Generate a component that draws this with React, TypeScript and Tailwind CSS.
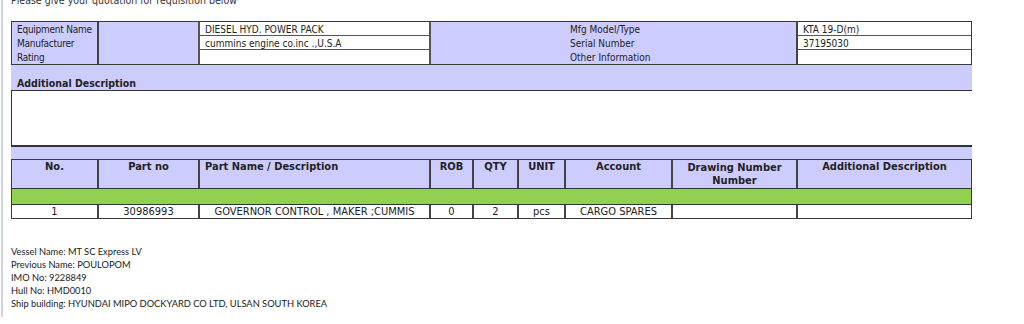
import React from "react";

const F = { fontFamily: '"DejaVu Sans Condensed", "DejaVu Sans", sans-serif' };

export default function App() {
  const lav = "bg-[#ccccff]";
  return (
    <div className="w-[1024px] h-[324px] overflow-hidden bg-white pl-[1px]">
      <div className="h-full border-l-2 border-[#cfd5de] pl-[8px] text-[10.5px] text-[#222]" style={F}>
        <div className="-mt-[7px] h-[14px] leading-[14px] text-[#333] whitespace-nowrap">Please give your quotation for requisition below</div>
        <div className="h-[14px]" />
        {/* top table */}
        <div className="w-[961px] border border-[#3a3a3a] flex leading-[14px] whitespace-nowrap text-[10px]">
          <div className={`w-[87px] ${lav} border-r-2 border-[#444] pl-[5px] pt-[1px] tracking-[-0.25px]`}>
            <div className="h-[14px]">Equipment Name</div>
            <div className="h-[14px]">Manufacturer</div>
            <div className="h-[13px]">Rating</div>
          </div>
          <div className={`w-[101px] ${lav} border-r-2 border-[#555]`} />
          <div className="w-[231px] bg-white border-r-2 border-[#555]">
            <div className="h-[14px] pl-[5px] pt-[1px] leading-[13px] border-b border-[#555]">DIESEL HYD. POWER PACK</div>
            <div className="h-[14px] pl-[5px] pt-[1px] leading-[13px] border-b border-[#555]">cummins engine co.inc .,U.S.A</div>
            <div className="h-[13px]" />
          </div>
          <div className={`w-[367px] ${lav} border-r-2 border-[#444] pl-[139px] pt-[1px]`}>
            <div className="h-[14px]">Mfg Model/Type</div>
            <div className="h-[14px]">Serial Number</div>
            <div className="h-[13px]">Other Information</div>
          </div>
          <div className="flex-1 bg-white">
            <div className="h-[14px] pl-[5px] pt-[1px] leading-[13px] border-b border-[#555]">KTA 19-D(m)</div>
            <div className="h-[14px] pl-[5px] pt-[1px] leading-[13px] border-b border-[#555]">37195030</div>
            <div className="h-[13px]" />
          </div>
        </div>
        {/* additional description band */}
        <div className={`w-[961px] ${lav} pt-[12px] h-[25px] pl-[6px] font-bold leading-[13px]`}>Additional Description</div>
        <div className="w-[961px] h-[57px] bg-white border-t border-b-2 border-l border-[#333]" />
        <div className={`w-[961px] ${lav} h-[12px]`} />
        {/* main table */}
        <div className="w-[961px] border border-[#3a3a3a] leading-[14px] whitespace-nowrap text-[11px]">
          <div className={`flex ${lav} h-[29px] font-bold border-b border-[#333]`}>
            <div className="w-[87px] text-center border-r-2 border-[#444]">No.</div>
            <div className="w-[101px] text-center border-r-2 border-[#444]">Part no</div>
            <div className="w-[231px] pl-[5px] border-r-2 border-[#444]">Part Name / Description</div>
            <div className="w-[43px] text-center border-r-2 border-[#444]">ROB</div>
            <div className="w-[45px] text-center border-r-2 border-[#444]">QTY</div>
            <div className="w-[47px] text-center border-r-2 border-[#444]">UNIT</div>
            <div className="w-[107px] text-center border-r-2 border-[#444]">Account</div>
            <div className="w-[125px] text-center border-r-2 border-[#444] leading-[13px] pt-[1px]">Drawing Number<br />Number</div>
            <div className="flex-1 text-center">Additional Description</div>
          </div>
          <div className="h-[16px] bg-[#92d050] border-b border-[#333]" />
          <div className="flex h-[13px] leading-[13px] bg-white">
            <div className="w-[87px] text-center border-r-2 border-[#444]">1</div>
            <div className="w-[101px] text-center border-r-2 border-[#444]">30986993</div>
            <div className="w-[231px] text-center border-r-2 border-[#444]">GOVERNOR CONTROL , MAKER ;CUMMIS</div>
            <div className="w-[43px] text-center border-r-2 border-[#444]">0</div>
            <div className="w-[45px] text-center border-r-2 border-[#444]">2</div>
            <div className="w-[47px] text-center border-r-2 border-[#444]">pcs</div>
            <div className="w-[107px] text-center border-r-2 border-[#444]">CARGO SPARES</div>
            <div className="w-[125px] border-r-2 border-[#444]" />
            <div className="flex-1" />
          </div>
        </div>
        {/* vessel info */}
        <div className="mt-[26px] text-[9.3px] leading-[13px] text-[#1a1a1a]" style={{ fontFamily: 'Lato, "Open Sans", sans-serif' }}>
          <div>Vessel Name: MT SC Express LV</div>
          <div>Previous Name: POULOPOM</div>
          <div>IMO No: 9228849</div>
          <div>Hull No: HMD0010</div>
          <div>Ship building: HYUNDAI MIPO DOCKYARD CO LTD, ULSAN SOUTH KOREA</div>
        </div>
      </div>
    </div>
  );
}
